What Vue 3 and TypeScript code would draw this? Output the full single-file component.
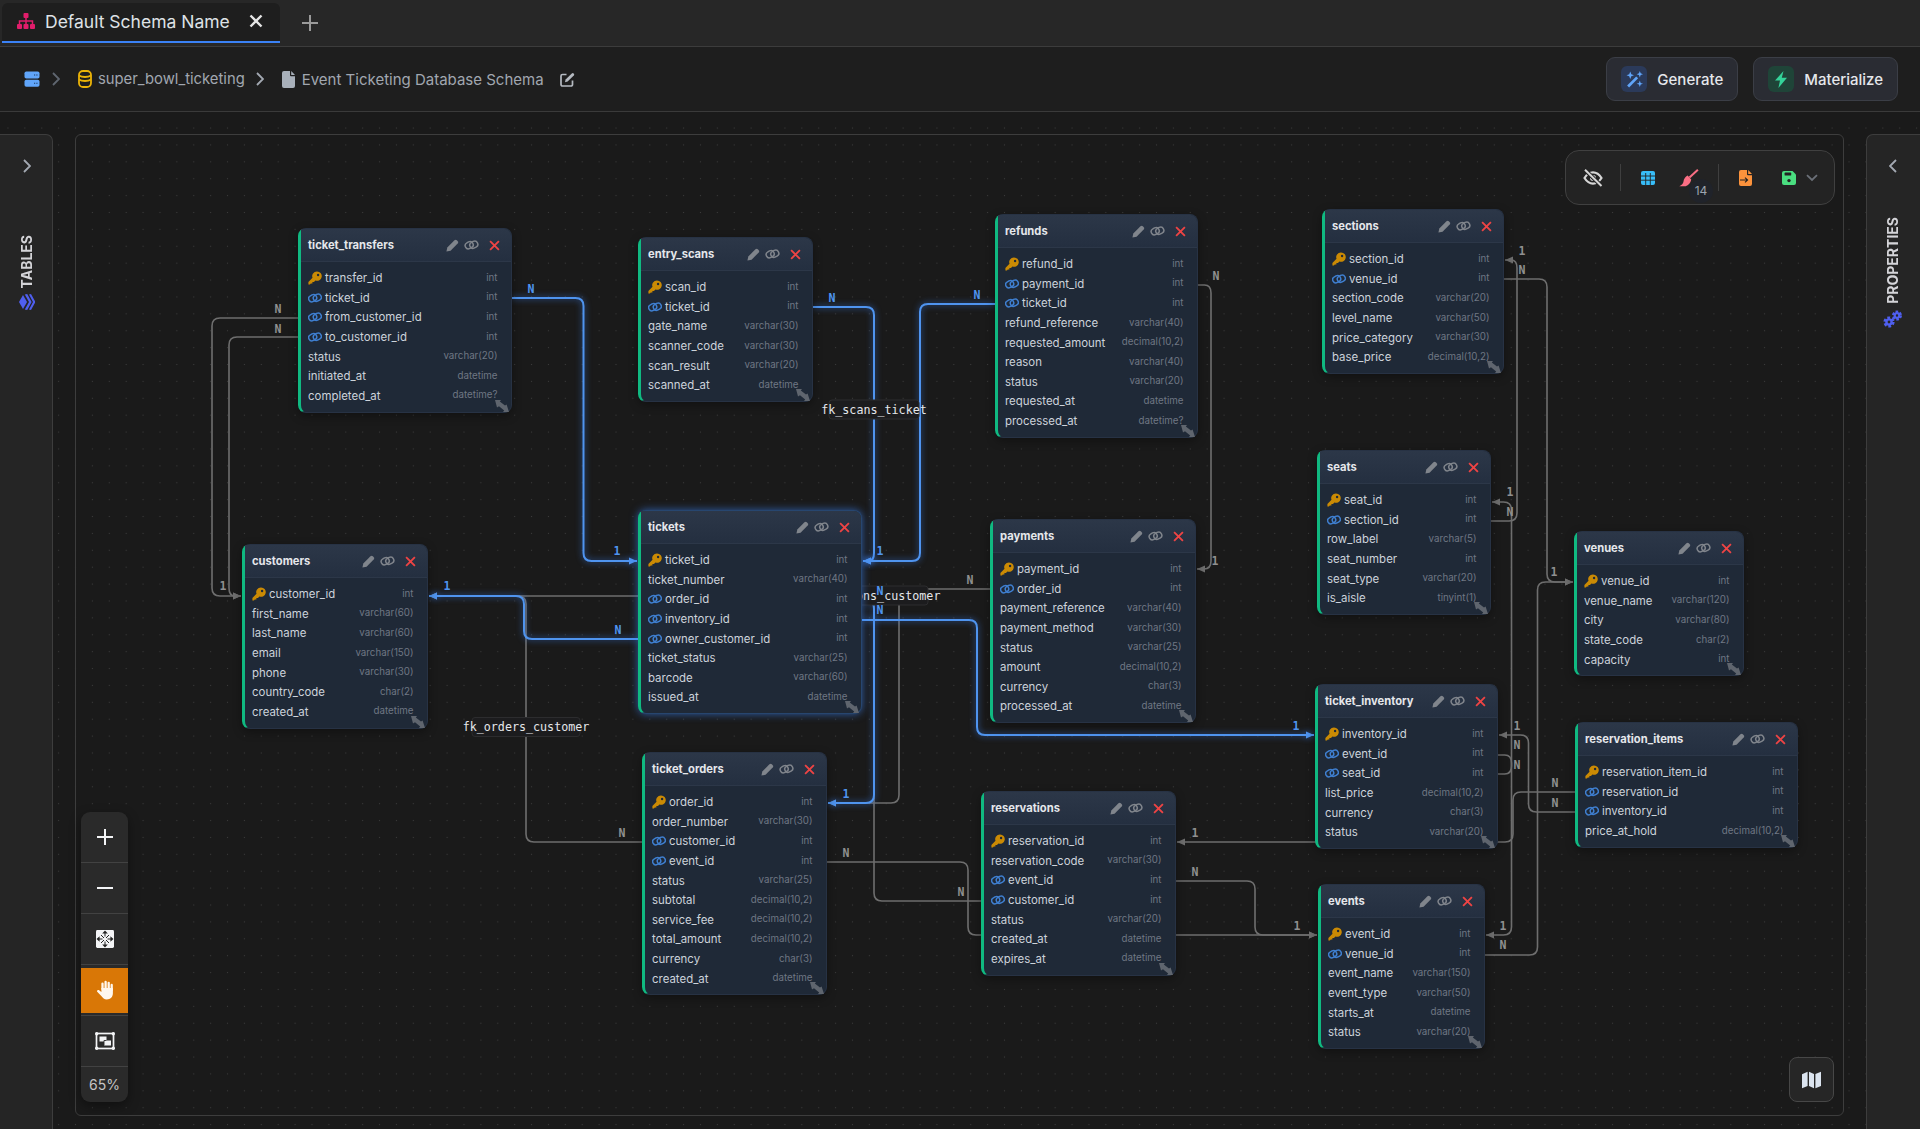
<script setup lang="ts">
type Kind = 'pk' | 'fk' | ''
type Col = [string, string, Kind?]
type Table = { name: string; x: number; y: number; w: number; active?: boolean; cols: Col[] }
type Pt = [number, number]
type Edge = { pts: Pt[]; blue?: boolean }
type Mark = { x: number; y: number; t: string; blue?: boolean }

// diagram coordinates are page pixels, the board starts at this corner
const originX = 76
const originY = 135

const tables: Table[] = [
  { name: 'ticket_transfers', x: 298, y: 228, w: 214, cols: [
    ['transfer_id', 'int', 'pk'], ['ticket_id', 'int', 'fk'], ['from_customer_id', 'int', 'fk'], ['to_customer_id', 'int', 'fk'],
    ['status', 'varchar(20)'], ['initiated_at', 'datetime'], ['completed_at', 'datetime?'] ] },
  { name: 'entry_scans', x: 638, y: 237, w: 175, cols: [
    ['scan_id', 'int', 'pk'], ['ticket_id', 'int', 'fk'], ['gate_name', 'varchar(30)'], ['scanner_code', 'varchar(30)'],
    ['scan_result', 'varchar(20)'], ['scanned_at', 'datetime'] ] },
  { name: 'refunds', x: 995, y: 214, w: 203, cols: [
    ['refund_id', 'int', 'pk'], ['payment_id', 'int', 'fk'], ['ticket_id', 'int', 'fk'], ['refund_reference', 'varchar(40)'],
    ['requested_amount', 'decimal(10,2)'], ['reason', 'varchar(40)'], ['status', 'varchar(20)'], ['requested_at', 'datetime'], ['processed_at', 'datetime?'] ] },
  { name: 'sections', x: 1322, y: 209, w: 182, cols: [
    ['section_id', 'int', 'pk'], ['venue_id', 'int', 'fk'], ['section_code', 'varchar(20)'], ['level_name', 'varchar(50)'],
    ['price_category', 'varchar(30)'], ['base_price', 'decimal(10,2)'] ] },
  { name: 'seats', x: 1317, y: 450, w: 174, cols: [
    ['seat_id', 'int', 'pk'], ['section_id', 'int', 'fk'], ['row_label', 'varchar(5)'], ['seat_number', 'int'],
    ['seat_type', 'varchar(20)'], ['is_aisle', 'tinyint(1)'] ] },
  { name: 'venues', x: 1574, y: 531, w: 170, cols: [
    ['venue_id', 'int', 'pk'], ['venue_name', 'varchar(120)'], ['city', 'varchar(80)'], ['state_code', 'char(2)'], ['capacity', 'int'] ] },
  { name: 'customers', x: 242, y: 544, w: 186, cols: [
    ['customer_id', 'int', 'pk'], ['first_name', 'varchar(60)'], ['last_name', 'varchar(60)'], ['email', 'varchar(150)'],
    ['phone', 'varchar(30)'], ['country_code', 'char(2)'], ['created_at', 'datetime'] ] },
  { name: 'tickets', x: 638, y: 510, w: 224, active: true, cols: [
    ['ticket_id', 'int', 'pk'], ['ticket_number', 'varchar(40)'], ['order_id', 'int', 'fk'], ['inventory_id', 'int', 'fk'],
    ['owner_customer_id', 'int', 'fk'], ['ticket_status', 'varchar(25)'], ['barcode', 'varchar(60)'], ['issued_at', 'datetime'] ] },
  { name: 'payments', x: 990, y: 519, w: 206, cols: [
    ['payment_id', 'int', 'pk'], ['order_id', 'int', 'fk'], ['payment_reference', 'varchar(40)'], ['payment_method', 'varchar(30)'],
    ['status', 'varchar(25)'], ['amount', 'decimal(10,2)'], ['currency', 'char(3)'], ['processed_at', 'datetime'] ] },
  { name: 'ticket_orders', x: 642, y: 752, w: 185, cols: [
    ['order_id', 'int', 'pk'], ['order_number', 'varchar(30)'], ['customer_id', 'int', 'fk'], ['event_id', 'int', 'fk'],
    ['status', 'varchar(25)'], ['subtotal', 'decimal(10,2)'], ['service_fee', 'decimal(10,2)'], ['total_amount', 'decimal(10,2)'],
    ['currency', 'char(3)'], ['created_at', 'datetime'] ] },
  { name: 'reservations', x: 981, y: 791, w: 195, cols: [
    ['reservation_id', 'int', 'pk'], ['reservation_code', 'varchar(30)'], ['event_id', 'int', 'fk'], ['customer_id', 'int', 'fk'],
    ['status', 'varchar(20)'], ['created_at', 'datetime'], ['expires_at', 'datetime'] ] },
  { name: 'ticket_inventory', x: 1315, y: 684, w: 183, cols: [
    ['inventory_id', 'int', 'pk'], ['event_id', 'int', 'fk'], ['seat_id', 'int', 'fk'], ['list_price', 'decimal(10,2)'],
    ['currency', 'char(3)'], ['status', 'varchar(20)'] ] },
  { name: 'reservation_items', x: 1575, y: 722, w: 223, cols: [
    ['reservation_item_id', 'int', 'pk'], ['reservation_id', 'int', 'fk'], ['inventory_id', 'int', 'fk'], ['price_at_hold', 'decimal(10,2)'] ] },
  { name: 'events', x: 1318, y: 884, w: 167, cols: [
    ['event_id', 'int', 'pk'], ['venue_id', 'int', 'fk'], ['event_name', 'varchar(150)'], ['event_type', 'varchar(50)'],
    ['starts_at', 'datetime'], ['status', 'varchar(20)'] ] }
]

const edges: Edge[] = [
  { pts: [[298, 318], [212, 318], [212, 596], [241, 596]] },
  { pts: [[298, 337], [229, 337], [229, 596], [241, 596]] },
  { pts: [[642, 842], [526, 842], [526, 596], [429, 596]] },
  { pts: [[981, 901], [874, 901], [874, 596], [429, 596]] },
  { pts: [[990, 589], [899, 589], [899, 803], [828, 803]] },
  { pts: [[1198, 285], [1211, 285], [1211, 569], [1197, 569]] },
  { pts: [[1504, 279], [1547, 279], [1547, 582], [1573, 582]] },
  { pts: [[1491, 521], [1517, 521], [1517, 260], [1505, 260]] },
  { pts: [[1498, 774], [1511.5, 774], [1511.5, 502], [1492, 502]] },
  { pts: [[1498, 755], [1511.5, 755], [1511.5, 935], [1486, 935]] },
  { pts: [[1485, 955], [1537.5, 955], [1537.5, 582], [1573, 582]] },
  { pts: [[1575, 812], [1528.5, 812], [1528.5, 735], [1499, 735]] },
  { pts: [[1575, 792], [1513, 792], [1513, 842], [1177, 842]] },
  { pts: [[1176, 881], [1255, 881], [1255, 935], [1317, 935]] },
  { pts: [[827, 862], [968, 862], [968, 935], [1317, 935]] },
  { pts: [[512, 298], [583.5, 298], [583.5, 561], [637, 561]], blue: true },
  { pts: [[813, 307], [874, 307], [874, 561], [863, 561]], blue: true },
  { pts: [[995, 304], [920, 304], [920, 561], [863, 561]], blue: true },
  { pts: [[638, 639], [524, 639], [524, 596], [429, 596]], blue: true },
  { pts: [[862, 601], [874, 601], [874, 803], [828, 803]], blue: true },
  { pts: [[862, 620], [977, 620], [977, 735], [1314, 735]], blue: true }
]

const marks: Mark[] = [
  { x: 278, y: 309, t: 'N' }, { x: 278, y: 329, t: 'N' }, { x: 223, y: 586, t: '1' },
  { x: 622, y: 833, t: 'N' }, { x: 970, y: 580, t: 'N' },
  { x: 1216, y: 276, t: 'N' }, { x: 1215, y: 561, t: '1' },
  { x: 1554, y: 572, t: '1' },
  { x: 1522, y: 251, t: '1' }, { x: 1522, y: 270, t: 'N' },
  { x: 1510, y: 492, t: '1' }, { x: 1510, y: 512, t: 'N' },
  { x: 1517, y: 726, t: '1' }, { x: 1517, y: 745, t: 'N' }, { x: 1517, y: 765, t: 'N' },
  { x: 1503, y: 926, t: '1' }, { x: 1503, y: 945, t: 'N' },
  { x: 1555, y: 783, t: 'N' }, { x: 1555, y: 803, t: 'N' },
  { x: 1195, y: 833, t: '1' }, { x: 1195, y: 872, t: 'N' }, { x: 1297, y: 926, t: '1' },
  { x: 846, y: 853, t: 'N' }, { x: 961, y: 892, t: 'N' },
  { x: 531, y: 289, t: 'N', blue: true }, { x: 617, y: 551, t: '1', blue: true },
  { x: 832, y: 298, t: 'N', blue: true }, { x: 880, y: 551, t: '1', blue: true },
  { x: 977, y: 295, t: 'N', blue: true }, { x: 618, y: 630, t: 'N', blue: true },
  { x: 447, y: 586, t: '1', blue: true }, { x: 880, y: 591, t: 'N', blue: true },
  { x: 880, y: 610, t: 'N', blue: true }, { x: 846, y: 794, t: '1', blue: true },
  { x: 1296, y: 726, t: '1', blue: true }
]

const fkLabels = [
  { x: 874, y: 409.5, w: 90, t: 'fk_scans_ticket' },
  { x: 526, y: 727, w: 108, t: 'fk_orders_customer' },
  { x: 856, y: 595.5, w: 144, t: 'fk_reservations_customer' }
]

const zoomTools = ['plus', 'minus', 'fit', 'hand', 'frame']

function linePath(pts: Pt[], r = 8): string {
  let d = `M${pts[0][0]} ${pts[0][1]}`
  for (let i = 1; i < pts.length - 1; i++) {
    const [x, y] = pts[i]
    const [px, py] = pts[i - 1]
    const [nx, ny] = pts[i + 1]
    const r1 = Math.min(r, Math.hypot(x - px, y - py) / 2)
    const r2 = Math.min(r, Math.hypot(nx - x, ny - y) / 2)
    const a = Math.atan2(y - py, x - px)
    const b = Math.atan2(ny - y, nx - x)
    d += ` L${x - Math.cos(a) * r1} ${y - Math.sin(a) * r1} Q${x} ${y} ${x + Math.cos(b) * r2} ${y + Math.sin(b) * r2}`
  }
  const end = pts[pts.length - 1]
  return d + ` L${end[0]} ${end[1]}`
}

function arrowHead(pts: Pt[]): string {
  const [x, y] = pts[pts.length - 1]
  const [px, py] = pts[pts.length - 2]
  const a = Math.atan2(y - py, x - px)
  const bx = x - Math.cos(a) * 8
  const by = y - Math.sin(a) * 8
  const wx = -Math.sin(a) * 3.6
  const wy = Math.cos(a) * 3.6
  return `${x},${y} ${bx + wx},${by + wy} ${bx - wx},${by - wy}`
}
</script>

<template>
  <div class="app">
    <svg class="sprites" width="0" height="0">
      <symbol id="i-key" viewBox="0 0 14 14">
        <path fill="currentColor" fill-rule="evenodd" d="M9 0.4a4.7 4.7 0 1 1-1.6 9.1L6 11H4.4v1.6H2.8L1.9 13.6H0.4V10.9L4.5 6.8A4.7 4.7 0 0 1 9 0.4ZM10.1 2.8a1.2 1.2 0 1 0 0 2.4 1.2 1.2 0 0 0 0-2.4Z" />
      </symbol>
      <symbol id="i-link" viewBox="0 0 14 12">
        <g fill="none" stroke="currentColor" stroke-width="1.5">
          <rect x="0.6" y="3" width="8.2" height="6.4" rx="3.2" transform="rotate(-28 4.7 6.2)" />
          <rect x="5.2" y="2.5" width="8.2" height="6.4" rx="3.2" transform="rotate(-28 9.3 5.7)" />
        </g>
      </symbol>
      <symbol id="i-pen" viewBox="0 0 12 12">
        <path fill="currentColor" d="M0.4 11.6 1.2 7.8 7.8 1.2a1.6 1.6 0 0 1 2.2 0l.8.8a1.6 1.6 0 0 1 0 2.2L4.2 10.8Z" />
      </symbol>
      <symbol id="i-close" viewBox="0 0 12 12">
        <path fill="none" stroke="currentColor" stroke-width="2" d="M1.2 1.2 10.8 10.8M10.8 1.2 1.2 10.8" />
      </symbol>
      <symbol id="i-resize" viewBox="0 0 14 12">
        <path fill="currentColor" d="M0 0H6L4.8 1.4 10 5.6 11.6 4.4 14 12H8L9.2 10.4 4 6.2 2 7.4Z" />
      </symbol>
    </svg>

    <header class="tabbar">
      <div class="tab">
        <svg class="tab-icon" viewBox="0 0 18 16" width="18" height="16">
          <g fill="#e11d6b">
            <rect x="6.5" y="0" width="5" height="5" rx="1" />
            <rect x="0" y="11" width="5" height="5" rx="1" />
            <rect x="6.5" y="11" width="5" height="5" rx="1" />
            <rect x="13" y="11" width="5" height="5" rx="1" />
          </g>
          <path fill="none" stroke="#e11d6b" stroke-width="1.5" d="M9 5V11M2.5 11V8H15.5V11" />
        </svg>
        <span class="tab-title">Default Schema Name</span>
        <svg class="tab-close" viewBox="0 0 14 14" width="14" height="14">
          <path fill="none" stroke="#e5e5e5" stroke-width="2.4" d="M1.5 1.5 12.5 12.5M12.5 1.5 1.5 12.5" />
        </svg>
      </div>
      <svg class="tab-add" viewBox="0 0 16 16" width="16" height="16">
        <path fill="none" stroke="#9a9a9a" stroke-width="2" d="M8 0V16M0 8H16" />
      </svg>
    </header>

    <nav class="crumbs">
      <svg viewBox="0 0 16 16" width="16" height="16">
        <rect x="0.5" y="0.5" width="15" height="7" rx="1.8" fill="#60a5fa" />
        <rect x="0.5" y="8.8" width="15" height="7" rx="1.8" fill="#60a5fa" />
        <path fill="#1e3a5f" d="M10 3.5h1.2v1H10zM12.3 3.5h1.2v1h-1.2zM10 11.8h1.2v1H10zM12.3 11.8h1.2v1h-1.2z" />
      </svg>
      <svg class="chev dim" viewBox="0 0 8 14" width="8" height="14"><path d="M1 1l6 6-6 6" /></svg>
      <svg viewBox="0 0 14 18" width="14" height="18">
        <g fill="none" stroke="#eab308" stroke-width="1.8">
          <rect x="1" y="1" width="12" height="16" rx="4" />
          <path d="M1 5.5c3 2 9 2 12 0M1 9.5c3 2 9 2 12 0" />
        </g>
      </svg>
      <span class="crumb-text">super_bowl_ticketing</span>
      <svg class="chev next" viewBox="0 0 8 14" width="8" height="14"><path d="M1 1l6 6-6 6" /></svg>
      <svg viewBox="0 0 13 17" width="13" height="17">
        <path fill="#a8b0ba" d="M2 0H8V4.2A1 1 0 0 0 9 5.2H13V15a2 2 0 0 1-2 2H2a2 2 0 0 1-2-2V2A2 2 0 0 1 2 0ZM9.2 0 13 4H9.2Z" />
      </svg>
      <span class="crumb-text schema">Event Ticketing Database Schema</span>
      <svg class="crumb-edit" viewBox="0 0 15 15" width="15" height="15">
        <path fill="none" stroke="#b5bac1" stroke-width="1.7" d="M6.5 2.5H2.5A1.5 1.5 0 0 0 1 4V12.5A1.5 1.5 0 0 0 2.5 14H11A1.5 1.5 0 0 0 12.5 12.5V8.5" />
        <path fill="#b5bac1" d="M5 10.3 5.6 7.6 11.8 1.4a1.3 1.3 0 0 1 1.8 0l.2.2a1.3 1.3 0 0 1 0 1.8L7.6 9.6Z" />
      </svg>
      <div class="actions">
        <button class="action">
          <span class="action-icon generate">
            <svg viewBox="0 0 16 16" width="17" height="17">
              <path stroke="#60a5fa" stroke-width="2.6" d="M2 14.5 10.5 6" />
              <path fill="#60a5fa" d="M4 0.5 5 3 7.5 4 5 5 4 7.5 3 5 0.5 4 3 3ZM13 0 13.8 2.2 16 3 13.8 3.8 13 6 12.2 3.8 10 3 12.2 2.2ZM13 9 13.8 11.2 16 12 13.8 12.8 13 15 12.2 12.8 10 12 12.2 11.2Z" />
            </svg>
          </span>
          Generate
        </button>
        <button class="action">
          <span class="action-icon materialize">
            <svg viewBox="0 0 14 17" width="14" height="17">
              <path fill="#34d399" d="M9.5 0 1 9.6H6L4.4 17 13 6.8H7.8Z" />
            </svg>
          </span>
          Materialize
        </button>
      </div>
    </nav>

    <main class="workspace">
      <aside class="side left">
        <svg class="side-chev" viewBox="0 0 8 14" width="8" height="14"><path d="M1 1l6 6-6 6" /></svg>
        <div class="side-label">
          <span>TABLES</span>
          <svg class="stack" viewBox="0 0 16 16" width="16" height="16">
            <path fill="#4f5fef" d="M8 0 15 4 8 8 1 4Z" />
            <path fill="#4f5fef" d="M0.6 5.8 8 10 15.4 5.8 16 8.2 8 12.6 0 8.2Z" />
            <path fill="#4f5fef" d="M0.6 10 8 14 15.4 10 16 12 8 16.4 0 12Z" />
          </svg>
        </div>
      </aside>

      <section class="canvas">
        <div class="board">
          <svg class="edges" viewBox="76 135 1768 981" width="1768" height="981">
            <g v-for="(e, i) in edges" :key="i" :class="e.blue ? 'edge blue' : 'edge'">
              <path :d="linePath(e.pts)" />
              <polygon :points="arrowHead(e.pts)" />
            </g>
            <g v-for="l in fkLabels" :key="l.t">
              <rect class="fk-box" :x="l.x - l.w / 2" :y="l.y - 9.5" :width="l.w" height="19" rx="3" />
              <text class="fk-text" :x="l.x" :y="l.y + 4">{{ l.t }}</text>
            </g>
            <text v-for="(m, i) in marks" :key="i" :class="m.blue ? 'mark blue' : 'mark'" :x="m.x" :y="m.y + 4">{{ m.t }}</text>
          </svg>

          <article
            v-for="t in tables"
            :key="t.name"
            :class="t.active ? 'table active' : 'table'"
            :style="{ left: t.x - originX + 'px', top: t.y - originY + 'px', width: t.w + 'px' }"
          >
            <div class="table-head">
              <span class="table-name">{{ t.name }}</span>
              <svg class="ico-pen" width="13" height="13"><use href="#i-pen" /></svg>
              <svg class="ico-chain" width="15" height="12"><use href="#i-link" /></svg>
              <svg class="ico-x" width="11" height="11"><use href="#i-close" /></svg>
            </div>
            <div class="table-body">
              <div v-for="c in t.cols" :key="c[0]" class="col">
                <svg v-if="c[2] === 'pk'" class="col-ico pk" width="14" height="14"><use href="#i-key" /></svg>
                <svg v-else-if="c[2] === 'fk'" class="col-ico fk" width="14" height="12"><use href="#i-link" /></svg>
                <span class="col-name">{{ c[0] }}</span>
                <span class="col-type">{{ c[1] }}</span>
              </div>
            </div>
            <svg class="resize" width="14" height="12"><use href="#i-resize" /></svg>
          </article>
        </div>

        <div class="toolbar">
          <button class="tool eye">
            <svg viewBox="0 0 20 18" width="20" height="18">
              <path fill="none" stroke="#d6d6d6" stroke-width="2.2" d="M1.5 9C4 5 6.8 3.4 10 3.4S16 5 18.5 9C16 13 13.2 14.6 10 14.6S4 13 1.5 9Z" />
              <circle cx="10" cy="9" r="3" fill="#d6d6d6" />
              <path stroke="#232323" stroke-width="4" d="M3 2 17.5 16" />
              <path stroke="#d6d6d6" stroke-width="2" d="M2 0.8 18.5 17" />
            </svg>
          </button>
          <i class="tool-sep" />
          <button class="tool grid-btn">
            <svg viewBox="0 0 14 14" width="14" height="14">
              <rect width="14" height="14" rx="2" fill="#38bdf8" />
              <path stroke="#232323" stroke-width="0.9" d="M0 5H14M0 9.2H14M4.7 2V14M9.3 2V14" />
            </svg>
          </button>
          <button class="tool brush">
            <svg viewBox="0 0 18 16" width="20" height="18">
              <path stroke="#fb6f84" stroke-width="1.8" d="M17 0.6 9.4 7.6" />
              <path fill="#fb6f84" d="M7.8 5.8 11 9.4C10.6 12 8.5 15 6 15.4H0.3C2.5 14.4 3.8 13 4 11.4 4.2 9 5.8 6.8 7.8 5.8Z" />
            </svg>
            <span class="badge">14</span>
          </button>
          <i class="tool-sep" />
          <button class="tool file">
            <svg viewBox="0 0 13 16" width="13" height="16">
              <path fill="#fb923c" d="M2 0H8V4.2A1 1 0 0 0 9 5.2H13V14a2 2 0 0 1-2 2H2a2 2 0 0 1-2-2V2A2 2 0 0 1 2 0ZM9.2 0 13 4H9.2Z" />
              <path fill="none" stroke="#232323" stroke-width="1.1" d="M1 10H8.5M6 7.6 8.6 10 6 12.4" />
            </svg>
          </button>
          <button class="tool save">
            <svg viewBox="0 0 14 14" width="14" height="14">
              <path fill="#4ade80" d="M2 0H10.5L14 3.5V12a2 2 0 0 1-2 2H2a2 2 0 0 1-2-2V2A2 2 0 0 1 2 0Z" />
              <rect x="2.6" y="1.6" width="6.6" height="3" rx="0.6" fill="#232323" />
              <circle cx="7" cy="9.6" r="1.7" fill="#232323" />
            </svg>
          </button>
          <svg class="tool-chev" viewBox="0 0 12 8" width="12" height="8"><path d="M1 1.2 6 6l5-4.8" /></svg>
        </div>

        <div class="zoom">
          <button v-for="tool in zoomTools" :key="tool" :class="tool === 'hand' ? 'zoom-btn on' : 'zoom-btn'">
            <svg v-if="tool === 'plus'" viewBox="0 0 16 16" width="16" height="16">
              <path stroke="#f3f4f6" stroke-width="2" d="M8 0V16M0 8H16" />
            </svg>
            <svg v-else-if="tool === 'minus'" viewBox="0 0 16 4" width="16" height="4">
              <path stroke="#f3f4f6" stroke-width="2" d="M0 2H16" />
            </svg>
            <svg v-else-if="tool === 'fit'" viewBox="0 0 18 18" width="18" height="18">
              <rect width="18" height="18" rx="1.4" fill="#f3f4f6" />
              <path fill="#232323" d="M9 0.5 11.8 3.6H6.2ZM9 17.5 6.2 14.4H11.8ZM0.5 9 3.6 6.2V11.8ZM17.5 9 14.4 11.8V6.2Z" />
              <path stroke="#232323" stroke-width="1" d="M9 3V6.5M9 11.5V15M3 9H6.5M11.5 9H15M5 5 8 8M13 5 10 8M5 13 8 10M13 13 10 10" />
            </svg>
            <svg v-else-if="tool === 'hand'" viewBox="0 0 18 20" width="18" height="20">
              <g stroke="#fff7ed" stroke-width="2.3" stroke-linecap="round">
                <path d="M6.5 9V3.6M9.6 9V1.8M12.7 9V2.8M15.7 10V5" />
              </g>
              <path fill="#fff7ed" d="M5.4 8H16.9V13.2C16.9 17 14.4 19.4 10.8 19.4 8.2 19.4 6.8 18 5.3 16L1.2 11.8C0.4 10.8 1.6 9.4 2.8 10.1L5.4 12Z" />
            </svg>
            <svg v-else viewBox="0 0 20 18" width="20" height="18">
              <rect x="1.5" y="1.5" width="17" height="15" fill="none" stroke="#f3f4f6" stroke-width="1.7" />
              <g fill="#f3f4f6">
                <circle cx="1.7" cy="1.7" r="1.7" /><circle cx="18.3" cy="1.7" r="1.7" />
                <circle cx="1.7" cy="16.3" r="1.7" /><circle cx="18.3" cy="16.3" r="1.7" />
                <rect x="4.5" y="4.5" width="7" height="5" /><rect x="9" y="8.5" width="7" height="5" />
              </g>
              <path fill="none" stroke="#2a2a2a" stroke-width="0.9" d="M9 13.5V8.5H11.5" />
            </svg>
          </button>
          <div class="zoom-value">65%</div>
        </div>

        <button class="map-btn">
          <svg viewBox="0 0 19 18" width="19" height="18">
            <path fill="#dbe4ef" d="M0 3.2 5.6 0.8V15L0 17.2ZM7 0.8 12 3V17.2L7 15ZM13.4 3 19 0.8V15L13.4 17.2Z" />
          </svg>
        </button>
      </section>

      <aside class="side right">
        <svg class="side-chev" viewBox="0 0 8 14" width="8" height="14"><path d="M7 1 1 7l6 6" /></svg>
        <div class="side-label">
          <span>PROPERTIES</span>
          <svg viewBox="0 0 20 18" width="20" height="18">
            <g fill="none" stroke="#4f5fef">
              <circle cx="6" cy="12" r="3.8" stroke-width="3.6" stroke-dasharray="2.4 1.6" />
              <circle cx="6" cy="12" r="2.6" stroke-width="2.4" />
              <circle cx="14" cy="5.5" r="3.4" stroke-width="3.2" stroke-dasharray="2.2 1.4" />
              <circle cx="14" cy="5.5" r="2.3" stroke-width="2.2" />
            </g>
          </svg>
        </div>
      </aside>
    </main>
  </div>
</template>

<style scoped>
.app {
  width: 1920px;
  height: 1129px;
  display: flex;
  flex-direction: column;
  overflow: hidden;
  font-family: Inter, "Noto Sans", sans-serif;
  background: #1a1a1a;
}

.sprites {
  position: absolute;
}

button {
  font-family: inherit;
  padding: 0;
  border: 0;
  background: none;
}

.tabbar {
  height: 47px;
  box-sizing: border-box;
  padding: 3px 0 0 2px;
  display: flex;
  background: #272727;
  border-bottom: 1px solid #3c3c3c;
}

.tab {
  width: 278px;
  height: 40px;
  box-sizing: border-box;
  padding: 0 0 2px 15px;
  display: flex;
  align-items: center;
  background: #1e1e1e;
  border-radius: 6px 6px 0 0;
  border-bottom: 2px solid #3b82f6;
}

.tab-title {
  margin-left: 10px;
  font-size: 17.5px;
  color: #dfe2e6;
  white-space: nowrap;
  width: 204px;
}

.tab-add {
  margin: 12px 0 0 22px;
}

.crumbs {
  height: 65px;
  box-sizing: border-box;
  padding: 0 22px 0 24px;
  display: flex;
  align-items: center;
  background: #1e1e1e;
  border-bottom: 1px solid #3a3a3a;
}

.chev path,
.side-chev path,
.tool-chev path {
  fill: none;
  stroke: #a3a9b2;
  stroke-width: 1.8;
}

.chev {
  margin: 0 18px 0 12px;
}

.chev.next {
  margin: 0 18px 0 11px;
}

.chev.dim path {
  stroke: #5f6670;
}

.crumb-text {
  margin-left: 6px;
  font-size: 14.8px;
  color: #a1a7b0;
  white-space: nowrap;
}

.crumb-text.schema {
  margin-left: 7px;
  font-size: 15px;
}

.crumb-edit {
  margin-left: 16px;
}

.actions {
  margin-left: auto;
  display: flex;
  gap: 15px;
}

.action {
  height: 44px;
  padding: 0 14px;
  display: flex;
  align-items: center;
  gap: 10px;
  background: #2a2c33;
  border: 1px solid #3b3e46;
  border-radius: 9px;
  font-size: 15px;
  font-weight: 500;
  color: #e5e7eb;
}

.action-icon {
  width: 26px;
  height: 26px;
  display: flex;
  align-items: center;
  justify-content: center;
  border-radius: 6px;
}

.generate {
  background: #2b3a5a;
}

.materialize {
  background: #1f4438;
}

.workspace {
  flex: 1;
  display: flex;
  min-height: 0;
  background-color: #1a1a1a;
  background-image: radial-gradient(circle, #3b3b3b 0.8px, transparent 1px);
  background-size: 16.9px 16.9px;
  background-position: -0.5px 7.6px;
}

.side {
  margin-top: 22px;
  background: #252525;
  box-sizing: border-box;
  display: flex;
  flex-direction: column;
  align-items: center;
  position: relative;
}

.side.left {
  width: 53px;
  padding-left: 1px;
  border-right: 1px solid #3d3d3d;
  border-top: 1px solid #3d3d3d;
  border-top-right-radius: 7px;
}

.side.right {
  width: 54px;
  padding-right: 2px;
  border-left: 1px solid #3d3d3d;
  border-top: 1px solid #3d3d3d;
  border-top-left-radius: 7px;
}

.side-chev {
  margin-top: 24px;
}

.side-label {
  margin-top: 62px;
  display: flex;
  flex-direction: column;
  align-items: center;
  gap: 6px;
  font-size: 14px;
  font-weight: 700;
  color: #d4d4d8;
}

.side.right .side-label {
  margin-top: 44px;
  gap: 6px;
}

.side-label span {
  writing-mode: vertical-rl;
  transform: rotate(180deg);
}

.stack {
  transform: rotate(-90deg);
}

.canvas {
  flex: 1;
  position: relative;
  margin: 22px 22px 13px;
  border: 1px solid #3d3d3d;
  border-radius: 6px;
}

.board {
  position: absolute;
  inset: 0;
}

.edges {
  position: absolute;
  left: 0;
  top: 0;
  overflow: visible;
}

.edge path {
  fill: none;
  stroke: #6e6e6e;
  stroke-width: 1.6;
}

.edge polygon {
  fill: #6e6e6e;
}

.edge.blue {
  filter: drop-shadow(0 0 3px rgba(59, 130, 246, 0.75));
}

.edge.blue path {
  stroke: #4f94ef;
  stroke-width: 2;
}

.edge.blue polygon {
  fill: #4f94ef;
}

.fk-box {
  fill: #1c1c1e;
  stroke: #2c2c2e;
}

.fk-text {
  font-family: "DejaVu Sans Mono", monospace;
  font-size: 11.7px;
  fill: #e5e7eb;
  text-anchor: middle;
}

.mark {
  font-family: "DejaVu Sans Mono", monospace;
  font-size: 11.5px;
  font-weight: 700;
  fill: #8f8f8f;
  text-anchor: middle;
}

.mark.blue {
  fill: #4f94ef;
}

.table {
  position: absolute;
  box-sizing: border-box;
  background: #1f2937;
  border: 1px solid #273244;
  border-left: 3px solid #10b981;
  border-radius: 8px;
  box-shadow: 0 3px 10px rgba(0, 0, 0, 0.35);
}

.table.active {
  border-color: #27466f;
  border-left-color: #10b981;
  box-shadow: 0 0 8px rgba(59, 130, 246, 0.65);
}

.table-head {
  height: 33px;
  box-sizing: border-box;
  padding: 0 11px 0 7px;
  display: flex;
  align-items: center;
  background: linear-gradient(#2c3748, #242f40);
  border-bottom: 1px solid #2c3748;
  border-radius: 0 7px 0 0;
}

.table-name {
  flex: 1;
  font-size: 11.2px;
  font-weight: 700;
  color: #e5e7eb;
  white-space: nowrap;
}

.ico-pen {
  color: #80858c;
}

.ico-chain {
  margin-left: 5px;
  color: #80858c;
}

.ico-x {
  margin-left: 10px;
  color: #ef4444;
}

.table-body {
  padding: 6.5px 13.5px 6px 7px;
}

.col {
  height: 19.6px;
  display: flex;
  align-items: center;
  white-space: nowrap;
}

.col-ico {
  flex: none;
  margin-right: 3px;
}

.pk {
  color: #ca8a04;
}

.fk {
  color: #3f7fd0;
}

.col-name {
  flex: 1;
  font-size: 11.45px;
  color: #cdd3db;
}

.col-type {
  font-size: 9.75px;
  color: #6f7784;
  margin-top: -2px;
}

.resize {
  position: absolute;
  right: 2px;
  bottom: 0;
  color: #5f656e;
}

.toolbar {
  position: absolute;
  top: 15px;
  right: 8px;
  width: 270px;
  height: 55px;
  box-sizing: border-box;
  padding-left: 17px;
  display: flex;
  align-items: center;
  background: #232323;
  border: 1px solid #404040;
  border-radius: 14px;
}

.tool {
  position: relative;
  display: flex;
  align-items: center;
  justify-content: center;
}

.tool-sep {
  width: 1px;
  height: 27px;
  background: #3f3f3f;
}

.eye {
  margin-right: 17px;
}

.grid-btn {
  margin-left: 20px;
}

.brush {
  margin: 0 19px 0 24px;
}

.file {
  margin-left: 20px;
}

.save {
  margin-left: 30px;
}

.badge {
  position: absolute;
  left: 10px;
  top: 10px;
  width: 24px;
  height: 24px;
  display: flex;
  align-items: center;
  justify-content: center;
  border-radius: 50%;
  background: #20232a;
  font-size: 12px;
  color: #9ca3af;
}

.tool-chev {
  margin-left: 10px;
}

.tool-chev path {
  stroke: #6b7078;
}

.zoom {
  position: absolute;
  left: 5px;
  bottom: 13px;
  width: 47px;
  display: flex;
  flex-direction: column;
  background: #2a2a2a;
  border-radius: 9px;
  box-shadow: 0 4px 12px rgba(0, 0, 0, 0.4);
  overflow: hidden;
}

.zoom-btn {
  height: 51px;
  display: flex;
  align-items: center;
  justify-content: center;
  border-bottom: 1px solid #424242;
  box-sizing: border-box;
}

.zoom-btn.on {
  background: linear-gradient(#2a2a2a 0 3px, #d97706 3px 48px, #2a2a2a 48px);
}

.zoom-value {
  height: 35px;
  display: flex;
  align-items: center;
  justify-content: center;
  font-size: 14px;
  color: #c4c4c4;
}

.map-btn {
  position: absolute;
  right: 9px;
  bottom: 13px;
  width: 45px;
  height: 45px;
  display: flex;
  align-items: center;
  justify-content: center;
  background: #262626;
  border: 1px solid #474747;
  border-radius: 8px;
}
</style>

<style>
html,
body {
  margin: 0;
  background: #1a1a1a;
  overflow: hidden;
}
</style>
